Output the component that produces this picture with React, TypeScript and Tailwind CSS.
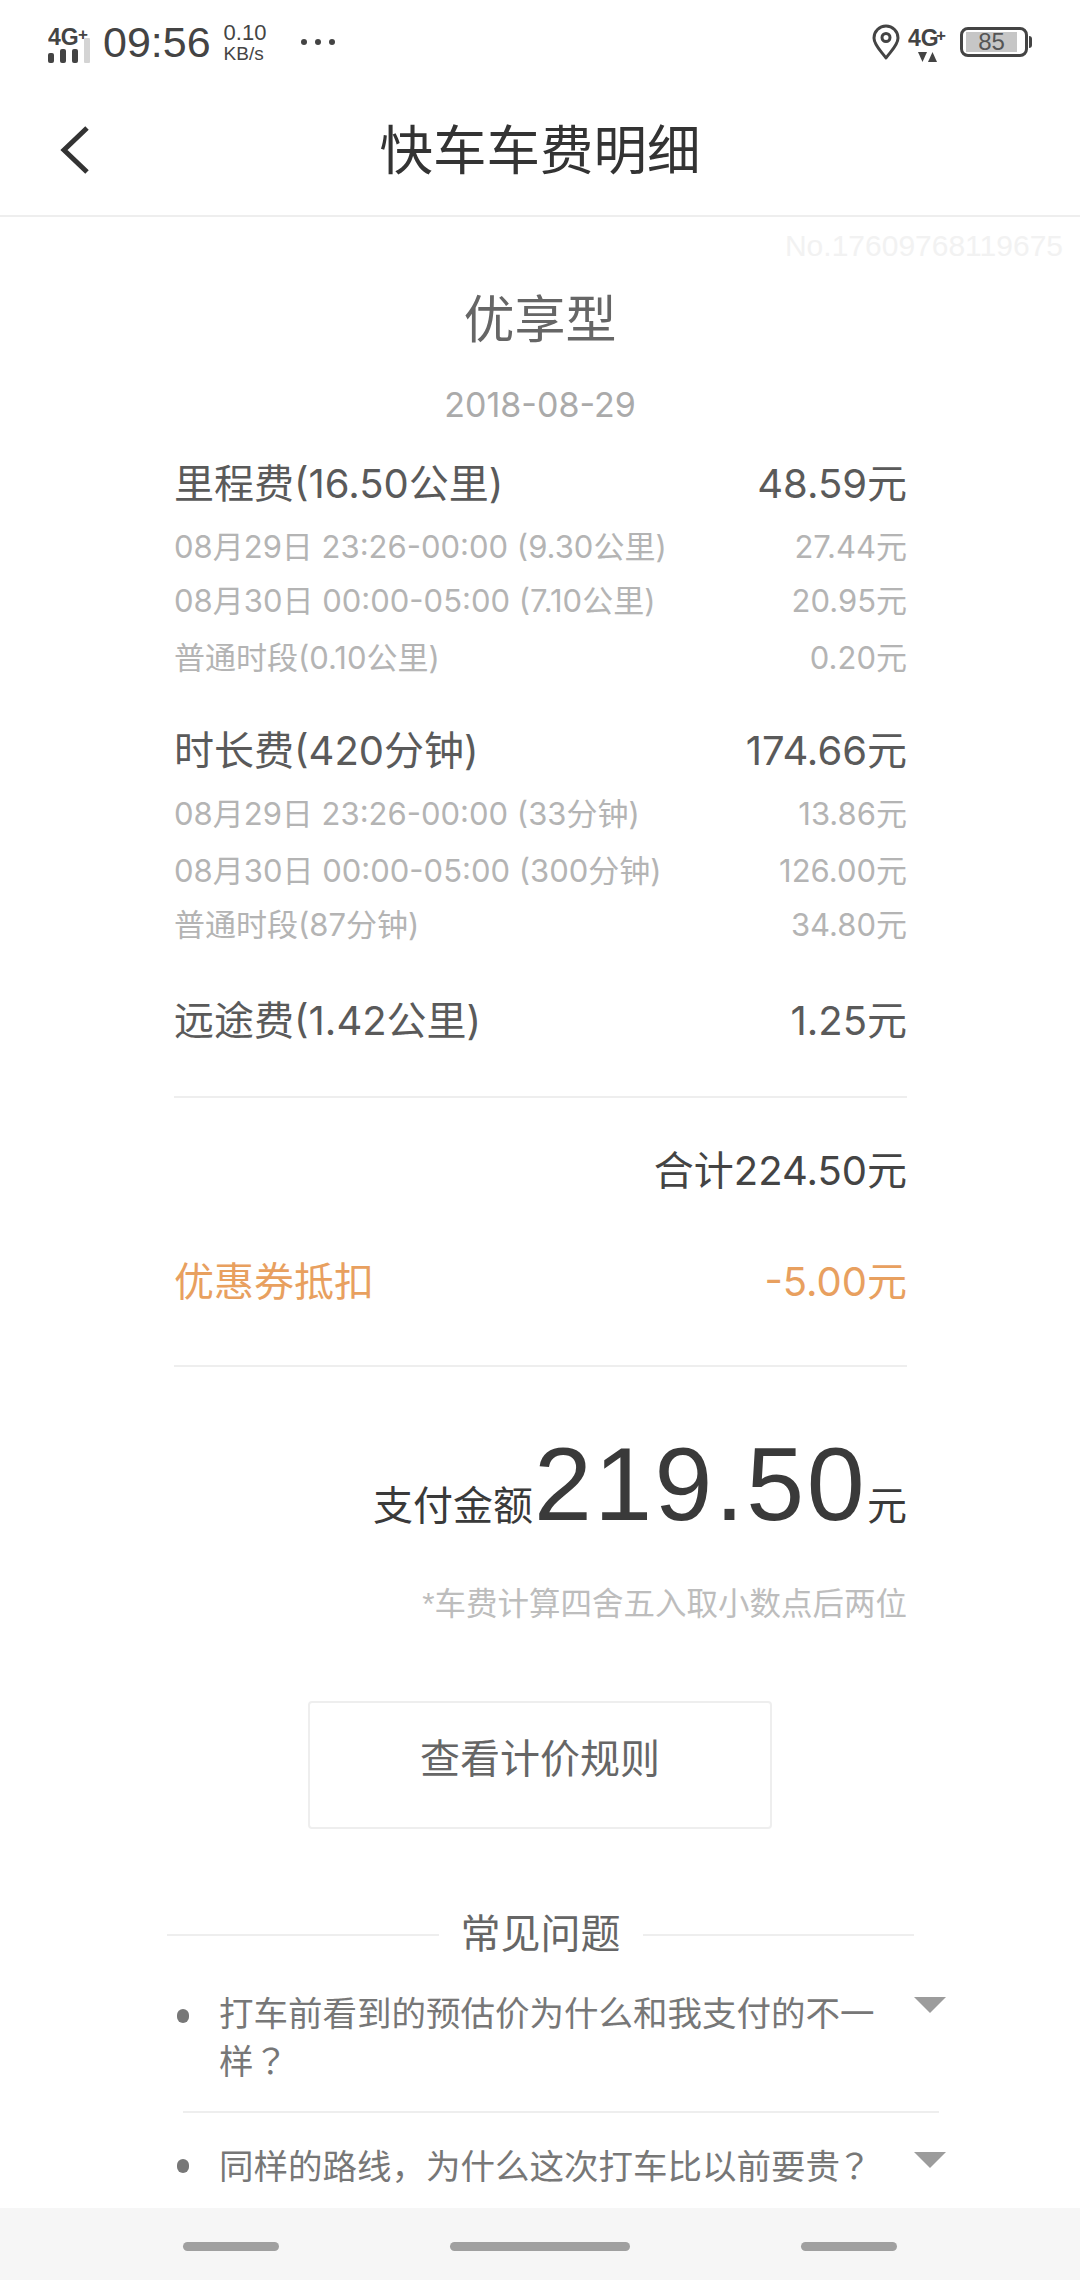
import React from "react";

const Row = ({ l, r, main, color, cls }: { l: string; r: string; main?: boolean; color?: string; cls: string }) => (
  <div className={`flex items-center justify-between font-['Inter','Noto_Sans_CJK_SC',sans-serif] ${main ? "h-[50px] text-[40px]" : "h-[40px] text-[31px]"} ${color ?? (main ? "text-[#5a5a5a]" : "text-[#b4b4b4]")} ${cls}`}>
    <span>{l}</span>
    <span>{r}</span>
  </div>
);

const Tri = () => (
  <svg width="32" height="16" viewBox="0 0 32 16" className="shrink-0">
    <polygon points="0,0 32,0 16,16" fill="#9c9c9c" />
  </svg>
);

export default function App() {
  return (
    <div className="w-[1080px] h-[2280px] overflow-hidden bg-white flex flex-col font-['Liberation_Sans','Noto_Sans_CJK_SC',sans-serif]">
      {/* status bar */}
      <div className="h-[84px] shrink-0 flex items-center justify-between pl-[48px] pr-[48px] text-[#444]">
        <div className="flex items-center">
          <svg width="44" height="44" viewBox="0 -8 44 44">
            <text x="0" y="17" fontSize="23" fontWeight="700" fill="#444" fontFamily="Liberation Sans">4G</text>
            <text x="30" y="12" fontSize="17" fontWeight="700" fill="#444" fontFamily="Liberation Sans">+</text>
            <rect x="0" y="25" width="6" height="10" rx="2" fill="#444" />
            <rect x="12" y="21" width="6" height="14" rx="2" fill="#444" />
            <rect x="24" y="21" width="6" height="14" rx="2" fill="#444" />
            <rect x="36" y="10" width="6" height="25" rx="1" fill="#d4d4d4" />
          </svg>
          <span className="ml-[11px] text-[43px] leading-none">09:56</span>
          <div className="ml-[13px] flex flex-col text-[22px] leading-[21px] pt-[2px]">
            <span>0.10</span>
            <span className="text-[19px]">KB/s</span>
          </div>
          <div className="ml-[35px] flex gap-[8px]">
            <span className="w-[6px] h-[6px] rounded-full bg-[#444]" />
            <span className="w-[6px] h-[6px] rounded-full bg-[#444]" />
            <span className="w-[6px] h-[6px] rounded-full bg-[#444]" />
          </div>
        </div>
        <div className="flex items-center">
          <svg width="28" height="36" viewBox="0 0 28 36">
            <path d="M14 34 C9 27 2 21 2 14 A12 12 0 0 1 26 14 C26 21 19 27 14 34 Z" fill="none" stroke="#444" strokeWidth="3" strokeLinejoin="round" />
            <circle cx="14" cy="13.5" r="4" fill="none" stroke="#444" strokeWidth="3" />
          </svg>
          <svg width="42" height="42" viewBox="0 -8 42 42" className="ml-[8px]">
            <text x="0" y="17" fontSize="23" fontWeight="700" fill="#444" fontFamily="Liberation Sans">4G</text>
            <text x="28" y="12" fontSize="17" fontWeight="700" fill="#444" fontFamily="Liberation Sans">+</text>
            <polygon points="10,23 19,23 14.5,33" fill="#444" />
            <polygon points="20,33 29,33 24.5,23" fill="#444" />
          </svg>
          <div className="ml-[10px] w-[68px] h-[30px] rounded-[8px] border-[3px] border-[#444] flex items-center pl-[3px]">
            <div className="w-[51px] h-[20px] bg-[#c6c6c6] flex items-center justify-center text-[24px] leading-none text-[#555]">85</div>
          </div>
          <div className="ml-[1px] w-[3px] h-[12px] rounded-r-[3px] bg-[#444]" />
        </div>
      </div>

      {/* header */}
      <div className="h-[133px] shrink-0 border-b-2 border-[#eeeeee] grid grid-cols-[1fr_auto_1fr] items-center">
        <div className="pl-[60px]">
          <svg width="32" height="48" viewBox="0 0 32 48">
            <path d="M27 2 L4 24 L27 46" fill="none" stroke="#333" strokeWidth="5" />
          </svg>
        </div>
        <div className="text-[53.5px] leading-none text-[#333] pt-[5px]">快车车费明细</div>
        <div />
      </div>

      {/* content */}
      <div className="flex-1 min-h-0 flex flex-col">
        <div className="h-[54px] pr-[17px] pt-[2px] flex items-center justify-end text-[30px] text-[#f2f2f2]">No.17609768119675</div>
        <div className="mt-[19px] h-[60px] pt-[3px] flex items-center justify-center text-[51px] text-[#666]">优享型</div>
        <div className="mt-[34px] h-[40px] flex items-center justify-center text-[34px] font-['Inter','Noto_Sans_CJK_SC',sans-serif] text-[#aaaaaa]">2018-08-29</div>

        <div className="pl-[174px] pr-[173px] flex flex-col">
          <Row main l="里程费(16.50公里)" r="48.59元" cls="mt-[35px]" />
          <Row l="08月29日 23:26-00:00 (9.30公里)" r="27.44元" cls="mt-[18px]" />
          <Row l="08月30日 00:00-05:00 (7.10公里)" r="20.95元" cls="mt-[14px]" />
          <Row l="普通时段(0.10公里)" r="0.20元" cls="mt-[17px]" />
          <Row main l="时长费(420分钟)" r="174.66元" cls="mt-[48px]" />
          <Row l="08月29日 23:26-00:00 (33分钟)" r="13.86元" cls="mt-[18px]" />
          <Row l="08月30日 00:00-05:00 (300分钟)" r="126.00元" cls="mt-[17px]" />
          <Row l="普通时段(87分钟)" r="34.80元" cls="mt-[14px]" />
          <Row main l="远途费(1.42公里)" r="1.25元" cls="mt-[51px]" />
          <div className="mt-[50px] h-[2px] bg-[#eeeeee]" />
          <div className="mt-[48px] h-[50px] flex items-center justify-end text-[40px] font-['Inter','Noto_Sans_CJK_SC',sans-serif] text-[#444]">合计224.50元</div>
          <Row main l="优惠券抵扣" r="-5.00元" color="text-[#e8a05f]" cls="mt-[61px]" />
          <div className="mt-[58px] h-[2px] bg-[#eeeeee]" />
          <div className="mt-[62px] h-[110px] flex items-baseline justify-end text-[#3a3a3a]">
            <span className="text-[40px]">支付金额</span>
            <span className="ml-[1px] text-[104px] leading-[110px] tracking-[2.5px]">219.50</span>
            <span className="text-[40px]">元</span>
          </div>
          <div className="mt-[46px] h-[40px] flex items-center justify-end text-[31.5px] text-[#bdbdbd]">*车费计算四舍五入取小数点后两位</div>
        </div>

        <div className="mt-[76px] mx-auto w-[464px] h-[128px] rounded-[4px] border-2 border-[#eeeeee] flex items-center justify-center pb-[12px] text-[40px] text-[#666]">查看计价规则</div>

        <div className="mt-[78px] h-[54px] pl-[167px] pr-[166px] flex items-center text-[40px] text-[#666]">
          <div className="flex-1 h-[2px] bg-[#eeeeee] mt-[2px]" />
          <span className="mx-[22px]">常见问题</span>
          <div className="flex-1 h-[2px] bg-[#eeeeee] mt-[2px]" />
        </div>

        <div className="mt-[31px] pl-[177px] pr-[134px] flex items-start text-[34.5px] leading-[45px] text-[#777]">
          <span className="mt-[17px] w-[12px] h-[14px] rounded-full bg-[#777] shrink-0" />
          <span className="ml-[30px] w-[670px]">打车前看到的预估价为什么和我支付的不一样<span className="font-['Noto_Sans_CJK_TC']">？</span></span>
          <span className="ml-auto mt-[5px] flex"><Tri /></span>
        </div>
        <div className="mt-[26px] ml-[183px] w-[756px] h-[2px] bg-[#eeeeee]" />
        <div className="mt-[29px] pl-[177px] pr-[134px] flex items-start text-[34.5px] leading-[45px] text-[#777]">
          <span className="mt-[17px] w-[12px] h-[14px] rounded-full bg-[#777] shrink-0" />
          <span className="ml-[30px] w-[670px]">同样的路线，为什么这次打车比以前要贵<span className="-ml-[3px] font-['Noto_Sans_CJK_TC']">？</span></span>
          <span className="ml-auto mt-[10px] flex"><Tri /></span>
        </div>
      </div>

      {/* nav */}
      <div className="h-[72px] shrink-0 bg-[#f6f6f6] pt-[4px] flex items-center">
        <div className="ml-[183px] w-[96px] h-[9px] rounded-full bg-[#a0a0a0]" />
        <div className="ml-[171px] w-[180px] h-[9px] rounded-full bg-[#a0a0a0]" />
        <div className="ml-[171px] w-[96px] h-[9px] rounded-full bg-[#a0a0a0]" />
      </div>
    </div>
  );
}
